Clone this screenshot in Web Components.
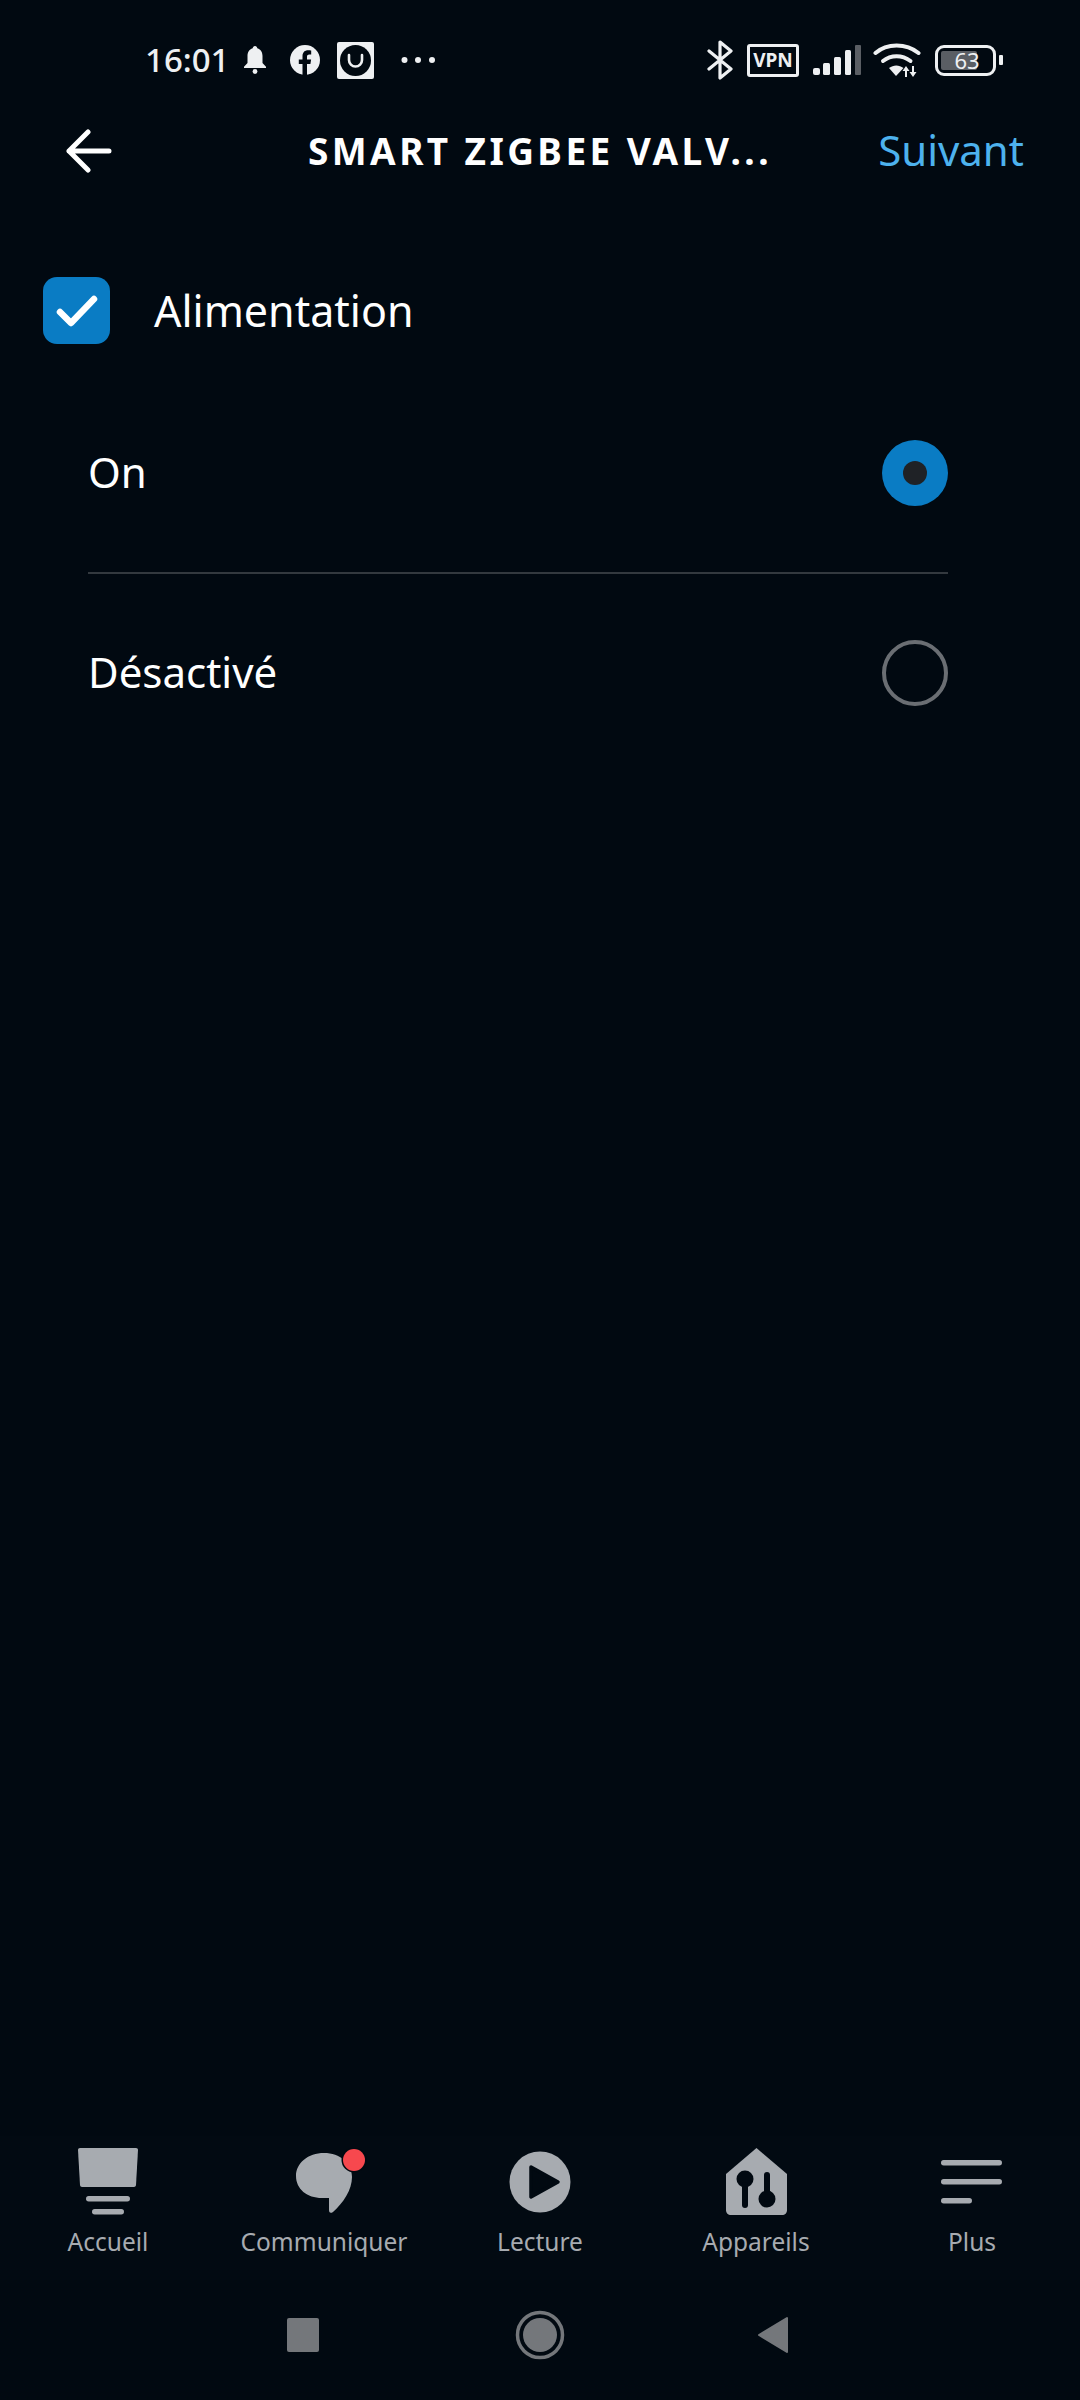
<!DOCTYPE html>
<html>
<head>
<meta charset="utf-8">
<style>
  html, body { margin: 0; height: 100%; background: #010911; }
  body { font-family: "Noto Sans", "Open Sans", sans-serif; color: #fff; }
  #app { display: flex; flex-direction: column; height: 2400px; width: 1080px; overflow: hidden; }
  #content { flex: 1; display: block; }
</style>
</head>
<body>
<div id="app">
  <status-bar></status-bar>
  <top-bar action="Suivant">SMART ZIGBEE VALV...</top-bar>
  <div id="content">
    <check-row>Alimentation</check-row>
    <radio-row selected divider>On</radio-row>
    <radio-row>Désactivé</radio-row>
  </div>
  <bottom-nav>
    <nav-item label="Accueil" icon="home"></nav-item>
    <nav-item label="Communiquer" icon="chat"></nav-item>
    <nav-item label="Lecture" icon="play"></nav-item>
    <nav-item label="Appareils" icon="devices"></nav-item>
    <nav-item label="Plus" icon="more"></nav-item>
  </bottom-nav>
  <system-nav></system-nav>
</div>

<script>
class StatusBar extends HTMLElement {
  constructor() {
    super();
    this.attachShadow({ mode: 'open' });
    this.shadowRoot.innerHTML = `
      <style>
        :host { display: flex; align-items: center; height: 120px; box-sizing: border-box; padding: 0 77px 0 145px; color: #eef0f2; }
        .time { font-size: 33px; line-height: 36px; font-weight: 500; width: 98px; }
        .left, .right { display: flex; align-items: center; }
        .right { margin-left: auto; }
        svg { display: block; }
        .vpn { box-sizing: border-box; width: 52px; height: 33px; border: 3px solid #eef0f2; border-radius: 3px; font-size: 19px; font-weight: 700; line-height: 26px; text-align: center; margin: 0 13px 0 14px; }
        .batt { position: relative; box-sizing: border-box; width: 61px; height: 31px; border: 3px solid #eef0f2; border-radius: 9px; margin-left: 14px; }
        .batt i { position: absolute; left: 3px; top: 3px; bottom: 3px; width: 36px; background: #5a5e64; border-radius: 2px; }
        .batt span { position: absolute; left: 3px; right: 0; top: 0; text-align: center; font-size: 22px; line-height: 25px; }
        .tip { width: 4px; height: 10px; background: #eef0f2; margin-left: 3px; border-radius: 1px; }
      </style>
      <div class="left">
        <span class="time">16:01</span>
        <svg width="24" height="28" viewBox="0 0 24 28" style="margin-right:22px">
          <path fill="#eef0f2" d="M12 0c1.400 0 2.200 1 2.300 2.300C18 3.400 19.500 6.500 19.500 10v7l3.500 3.800V22H1v-1.200L4.500 17v-7c0-3.500 1.500-6.600 5.200-7.700C9.800 1 10.600 0 12 0z"/>
          <circle cx="12" cy="25.500" r="2.400" fill="#eef0f2"/>
        </svg>
        <svg width="32" height="32" viewBox="0 0 32 32" style="margin-right:16px">
          <circle cx="16" cy="16" r="15" fill="#eef0f2"/>
          <path fill="#010911" d="M13.500 32V20H9.800v-4.500h3.700v-3.200c0-3.900 2.200-6 5.700-6 1.200 0 2.500.2 3 .3v3.900h-1.800c-1.900 0-2.400 1-2.400 2.200v2.800h4.100l-.7 4.500h-3.400v12z"/>
        </svg>
        <svg width="37" height="37" viewBox="0 0 37 37" style="margin-right:27px">
          <rect width="37" height="37" rx="2" fill="#eef0f2"/>
          <circle cx="18.500" cy="18.500" r="15.500" fill="#010911"/>
          <path fill="none" stroke="#eef0f2" stroke-width="2.600" stroke-linecap="round" d="M12 13v5a6.500 6.500 0 0 0 13 0v-5"/>
        </svg>
        <svg width="34" height="8" viewBox="0 0 34 8">
          <circle cx="3.500" cy="4" r="3" fill="#eef0f2"/><circle cx="17" cy="4" r="3" fill="#eef0f2"/><circle cx="31" cy="4" r="3" fill="#eef0f2"/>
        </svg>
      </div>
      <div class="right">
        <svg width="26" height="40" viewBox="0 0 26 40">
          <path fill="none" stroke="#eef0f2" stroke-width="3.200" stroke-linejoin="round" stroke-linecap="round" d="M2 11l22 18-11 9V2l11 9L2 29"/>
        </svg>
        <span class="vpn">VPN</span>
        <svg width="50" height="32" viewBox="0 0 50 32" style="margin-right:11px">
          <rect x="1" y="24" width="7" height="7" rx="2" fill="#eef0f2"/>
          <rect x="11" y="19" width="7" height="12" rx="1.500" fill="#eef0f2"/>
          <rect x="22" y="13" width="7" height="18" rx="1.500" fill="#eef0f2"/>
          <rect x="33" y="6" width="6" height="25" rx="1.500" fill="#eef0f2"/>
          <rect x="43" y="1" width="6" height="30" rx="1" fill="#5a5e64"/>
        </svg>
        <svg width="48" height="36" viewBox="0 0 48 36">
          <path fill="none" stroke="#eef0f2" stroke-width="4" stroke-linecap="round" d="M2.500 11C14 1 33 1 45.500 11"/>
          <path fill="none" stroke="#eef0f2" stroke-width="4" stroke-linecap="round" d="M10 19c8-6.500 19-6.500 27.500 0"/>
          <path fill="#eef0f2" d="M16 26c4.500-3.500 10-3.500 14.500 0L23 34z"/>
          <path fill="#eef0f2" d="M33 24l3.500 5H34v6h-2v-6h-2.500zM40 35l-3.500-5H39v-6h2v6h2.500z"/>
        </svg>
        <div class="batt"><i></i><span>63</span></div>
        <div class="tip"></div>
      </div>`;
  }
}

class TopBar extends HTMLElement {
  constructor() {
    super();
    this.attachShadow({ mode: 'open' });
  }

  connectedCallback() {
    this.shadowRoot.innerHTML = `
      <style>
        :host { display: grid; grid-template-columns: 1fr auto 1fr; align-items: center; height: 62px; box-sizing: border-box; padding: 0 56px; }
        svg { display: block; margin-left: 10px; }
        .title { font-size: 37px; font-weight: 700; letter-spacing: 3.400px; white-space: nowrap; padding-bottom: 2px; }
        .action { font-size: 42px; color: #4db2ee; justify-self: end; padding-bottom: 4px; }
      </style>
      <svg width="46" height="44" viewBox="0 0 46 44">
        <path fill="none" stroke="#fff" stroke-width="5" stroke-linecap="round" stroke-linejoin="round" d="M43 22H3M22 3L3 22l19 19"/>
      </svg>
      <div class="title"><slot></slot></div>
      <div class="action">${this.getAttribute('action')}</div>`;
  }
}

class CheckRow extends HTMLElement {
  constructor() {
    super();
    this.attachShadow({ mode: 'open' });
    this.shadowRoot.innerHTML = `
      <style>
        :host { display: flex; align-items: center; gap: 44px; box-sizing: border-box; height: 67px; margin: 95px 0 30px; padding-left: 43px; font-size: 43px; }
        .box { width: 67px; height: 67px; border-radius: 14px; background: #0a7cc4; display: flex; align-items: center; justify-content: center; }
      </style>
      <div class="box">
        <svg width="42" height="34" viewBox="0 0 42 34">
          <path fill="none" stroke="#fff" stroke-width="6.500" stroke-linecap="round" stroke-linejoin="round" d="M4 18l11 11L38 5"/>
        </svg>
      </div>
      <div><slot></slot></div>`;
  }
}

class RadioRow extends HTMLElement {
  constructor() {
    super();
    this.attachShadow({ mode: 'open' });
  }

  connectedCallback() {
    const selected = this.hasAttribute('selected');
    const divider = this.hasAttribute('divider');
    this.shadowRoot.innerHTML = `
      <style>
        :host { display: block; margin: 0 132px 0 88px; font-size: 42px; }
        .row { display: flex; align-items: center; justify-content: space-between; height: 198px; }
        .text { padding-bottom: 3px; }
        .line { height: 2px; background: #33393f; }
        .radio { box-sizing: border-box; width: 66px; height: 66px; border-radius: 50%; display: flex; align-items: center; justify-content: center; }
        .on { background: #0a7cc4; }
        .on i { display: block; width: 24px; height: 24px; border-radius: 50%; background: #1f2226; }
        .off { border: 4px solid #6a6e73; }
      </style>
      <div class="row">
        <div class="text"><slot></slot></div>
        <div class="radio ${selected ? 'on' : 'off'}">${selected ? '<i></i>' : ''}</div>
      </div>
      ${divider ? '<div class="line"></div>' : ''}`;
  }
}

// icon boxes are 94x68, centred on each 216px column
const NAV_ICONS = {
  home: `<path fill="#a7abb0" d="M19 0h56c1.200 0 2 .8 2 2l-2 35c-.1 1.200-1 2-2 2H21c-1 0-1.900-.8-2-2L17 2c0-1.200.8-2 2-2z"/>
    <rect x="25" y="48" width="44" height="5.500" rx="2.700" fill="#a7abb0"/>
    <rect x="31" y="61" width="32" height="5.500" rx="2.700" fill="#a7abb0"/>`,
  chat: `<path fill="#a7abb0" d="M47 5C63 5 75 15 75 29 75 42 66 55 56 64 53 66 52 64 52 62V50H45C30 50 19 41 19 28 19 15 31 5 47 5z"/>
    <circle cx="77" cy="12" r="12.500" fill="#010911"/>
    <circle cx="77" cy="12" r="11" fill="#f7484e"/>`,
  play: `<circle cx="47" cy="34" r="30.500" fill="#a7abb0"/>
    <path fill="#010911" stroke="#010911" stroke-width="3.500" stroke-linejoin="round" d="M38 19L65 34 38 49z"/>`,
  devices: `<path fill="#a7abb0" d="M47.500 0L78 26v36c0 3-2 5-5 5H22c-3 0-5-2-5-5V26z"/>
    <circle cx="36" cy="31" r="8.500" fill="#010911"/>
    <rect x="33" y="34" width="6" height="26" rx="3" fill="#010911"/>
    <circle cx="58" cy="51" r="8.500" fill="#010911"/>
    <rect x="55" y="24" width="6" height="30" rx="3" fill="#010911"/>`,
  more: `<rect x="16" y="12" width="61" height="5.500" rx="2.700" fill="#a7abb0"/>
    <rect x="16" y="31" width="61" height="5.500" rx="2.700" fill="#a7abb0"/>
    <rect x="16" y="50" width="31" height="5.500" rx="2.700" fill="#a7abb0"/>`
};

class NavItem extends HTMLElement {
  constructor() {
    super();
    this.attachShadow({ mode: 'open' });
  }

  connectedCallback() {
    this.shadowRoot.innerHTML = `
      <style>
        :host { display: flex; flex-direction: column; align-items: center; flex: 1; }
        svg { display: block; }
        .label { font-size: 24.500px; line-height: 32px; margin-top: 10px; color: #a7abb0; white-space: nowrap; }
      </style>
      <svg width="94" height="68" viewBox="0 0 94 68">${NAV_ICONS[this.getAttribute('icon')]}</svg>
      <div class="label">${this.getAttribute('label')}</div>`;
  }
}

class BottomNav extends HTMLElement {
  constructor() {
    super();
    this.attachShadow({ mode: 'open' });
    this.shadowRoot.innerHTML = `
      <style>
        :host { display: flex; box-sizing: border-box; height: 144px; padding-top: 12px; background: #020a12; }
      </style>
      <slot></slot>`;
  }
}

class SystemNav extends HTMLElement {
  constructor() {
    super();
    this.attachShadow({ mode: 'open' });
    this.shadowRoot.innerHTML = `
      <style>
        :host { display: flex; align-items: center; justify-content: space-between; height: 120px; box-sizing: border-box; padding: 0 291px 10px 287px; }
        svg { display: block; }
        .home { margin-left: 4px; }
      </style>
      <svg width="32" height="34" viewBox="0 0 32 34"><rect width="32" height="34" rx="2" fill="#74777b"/></svg>
      <svg class="home" width="50" height="50" viewBox="0 0 50 50">
        <circle cx="25" cy="25" r="22.500" fill="none" stroke="#74777b" stroke-width="3.500"/>
        <circle cx="25" cy="25" r="17" fill="#74777b"/>
      </svg>
      <svg width="32" height="38" viewBox="0 0 32 38"><path fill="#74777b" stroke="#74777b" stroke-width="2" stroke-linejoin="round" d="M30 2v34L2 19z"/></svg>`;
  }
}

customElements.define('status-bar', StatusBar);
customElements.define('top-bar', TopBar);
customElements.define('check-row', CheckRow);
customElements.define('radio-row', RadioRow);
customElements.define('nav-item', NavItem);
customElements.define('bottom-nav', BottomNav);
customElements.define('system-nav', SystemNav);
</script>
</body>
</html>
